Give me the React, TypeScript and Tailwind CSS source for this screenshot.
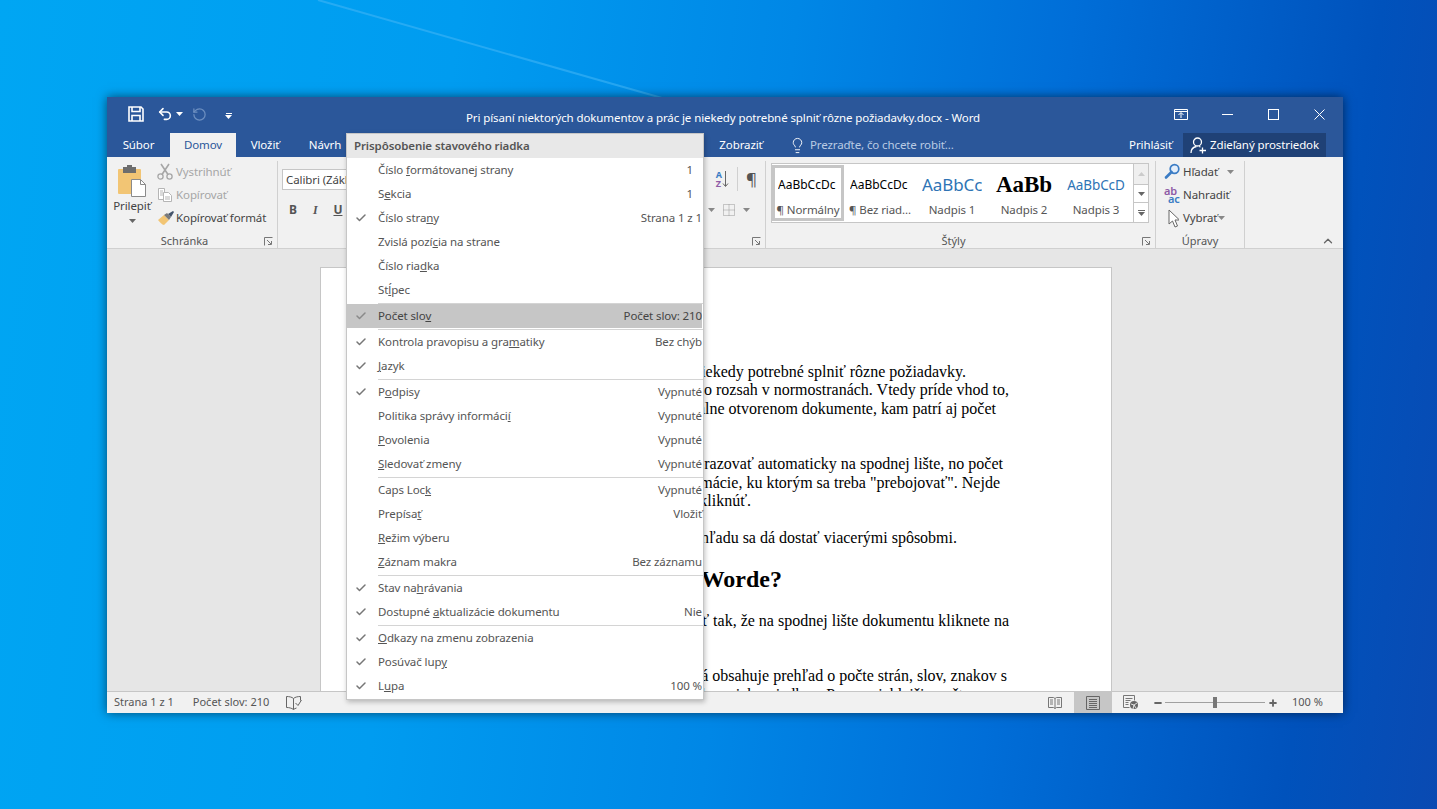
import React from "react";
import { Lightbulb, Undo2, RotateCcw, ChevronUp, Check, Minus, Plus } from "lucide-react";

const Caret = ({ c = "#666" }: { c?: string }) => (
  <svg width="7" height="4" viewBox="0 0 7 4"><path d="M0 0h7L3.5 4z" fill={c} /></svg>
);

const Launcher = () => (
  <svg width="9" height="9" viewBox="0 0 9 9" fill="none" stroke="#777" strokeWidth="1">
    <path d="M.5 8.5v-8h8" />
    <path d="M3 3l4 4M7.5 4v3.5H4" />
  </svg>
);

const Save = () => (
  <svg width="16" height="16" viewBox="0 0 16 16" fill="none" stroke="#fff" strokeWidth="1.6">
    <path d="M1 1h12l2 2v12H1z" />
    <path d="M4 1v4.5h8V1" />
    <path d="M4 15v-5.5h8V15" />
  </svg>
);

const Paste = () => (
  <svg width="30" height="32" viewBox="0 0 30 32">
    <rect x="1" y="4" width="23" height="25" rx="1" fill="#f2c574" />
    <rect x="6" y="2" width="13" height="6" fill="#6d6d6d" />
    <rect x="10" y="0" width="5" height="3" fill="#6d6d6d" />
    <path d="M14.5 14.5h9l5 5v12h-14z" fill="#fff" stroke="#8a8a8a" />
    <path d="M23.5 14.5v5h5" fill="none" stroke="#8a8a8a" />
  </svg>
);

const ScissorsIcon = () => (
  <svg width="16" height="17" viewBox="0 0 16 17" fill="none" stroke="#a6a6a6" strokeWidth="1.3">
    <circle cx="3.5" cy="13.5" r="2.6" />
    <circle cx="12.5" cy="13.5" r="2.6" />
    <path d="M5 11.500L12 1M11 11.500L4 1" strokeWidth="1.600" />
  </svg>
);

const CopyIcon = () => (
  <svg width="16" height="16" viewBox="0 0 16 16" fill="none" stroke="#b5b5b5">
    <path d="M1.5 1.5h6v11h-6z" fill="#fff" />
    <path d="M3 4h3M3 6h3M3 8h3" />
    <path d="M6.5 5.5h5l3 3v6h-8z" fill="#fff" />
    <path d="M8 10h5M8 12h5" />
  </svg>
);

const Painter = () => (
  <svg width="18" height="16" viewBox="0 0 18 16">
    <path d="M1 10l6-5 5 5-5 5c-2 0-4-3-6-5z" fill="#f2c574" />
    <path d="M7 5l3-2 4 4-2 3z" fill="#7a7a7a" />
    <path d="M11 4l5-3 1 1-3 5z" fill="#44546a" />
  </svg>
);

const Magnifier = () => (
  <svg width="17" height="17" viewBox="0 0 17 17" fill="none">
    <circle cx="10.5" cy="6" r="4.3" stroke="#3b7cc4" strokeWidth="1.7" fill="#e4eefa" />
    <path d="M7.5 9L2 14.5" stroke="#3b7cc4" strokeWidth="2.6" strokeLinecap="round" />
  </svg>
);

const CursorIcon = () => (
  <svg width="11" height="19" viewBox="0 0 11 19" fill="#fff" stroke="#666">
    <path d="M1 1v14l3.500-3 2.500 6 2.500-1-2.500-6h4.500z" />
  </svg>
);

const Sheet = () => (
  <svg width="14" height="14" viewBox="0 0 14 14" fill="none" stroke="#777">
    <path d="M.5 1.5h5l1.5 1 1.5-1h5v10h-5L7 12.5 5.500 11.500h-5z" />
    <path d="M7 2.500V12.500M2 4h3M2 6h3M2 8h3M9 4h3M9 6h3M9 8h3" />
  </svg>
);

const Proof = () => (
  <svg width="16" height="14" viewBox="0 0 16 14" fill="none" stroke="#666">
    <path d="M7.500 2.500C6 1 3 .5.500.5v11c2.500 0 5 .5 7 2V2.500z" />
    <path d="M7.500 2.500C9 1 12 .5 14.500.5v4M7.500 13.500c1-.7 2-1.200 3-1.500" />
    <path d="M9.500 7l2.500 2.500L15.500 4" />
  </svg>
);

const Lines = () => (
  <svg width="14" height="14" viewBox="0 0 14 14" fill="none" stroke="#666">
    <path d="M.5.5h13v13H.5z" />
    <path d="M3 3.500h8M3 5.500h8M3 7.500h8M3 9.500h8M3 11.500h8" />
  </svg>
);

const WebIcon = () => (
  <svg width="16" height="15" viewBox="0 0 16 15" fill="none" stroke="#777">
    <path d="M6.500 12.500H.5V.5h11v5" />
    <path d="M2.500 3.500h7M2.500 5.500h5M2.500 7.500h3M2.500 9.500h3" />
    <circle cx="11" cy="10" r="4" fill="#666" stroke="none" />
    <path d="M8 9l3 1 3-2M10 14l1-4 2 3" stroke="#fff" strokeWidth=".8" />
  </svg>
);

const RibbonBoxIcon = () => (
  <svg width="14" height="11" viewBox="0 0 14 11" fill="none" stroke="#fff">
    <path d="M.5.500h13v10H.5zM.5 2.500h13" />
    <path d="M7 9V4M4.500 6L7 3.500 9.500 6" />
  </svg>
);

const CloseIcon = () => (
  <svg width="11" height="11" viewBox="0 0 11 11" fill="none" stroke="#fff" strokeWidth="1">
    <path d="M.5.5l10 10M10.500.5l-10 10" />
  </svg>
);

const UserAdd = () => (
  <svg width="17" height="17" viewBox="0 0 17 17" fill="none" stroke="#fff" strokeWidth="1.300">
    <circle cx="7.500" cy="5" r="4" />
    <path d="M1 16c0-3.500 2.500-6 5.500-6.500M9 9.500l1.500.5" />
    <path d="M12.500 10.500v6M9.500 13.500h6.500" />
  </svg>
);

const Title = "Pri písaní niektorých dokumentov a prác je niekedy potrebné splniť rôzne požiadavky.docx - Word";

function Item({ children, value, check, active, inset }: { children: React.ReactNode; value?: string; check?: boolean; active?: boolean; inset?: boolean }) {
  return (
    <div className={active ? "mr-px flex h-6 items-center bg-[#c6c6c6] text-[#444]" : "flex h-6 items-center text-[#555]"}>
      <span className="flex w-[31px] shrink-0 justify-center pr-[3px]">
        {check && <Check size={12} strokeWidth={3} className={active ? "text-[#8a8a8a]" : "text-[#777]"} />}
      </span>
      <span className="flex-1 whitespace-nowrap">{children}</span>
      {value && <span className={inset ? "pr-[10px] whitespace-nowrap" : active ? "whitespace-nowrap" : "pr-[1px] whitespace-nowrap"}>{value}</span>}
    </div>
  );
}

const Sep = () => (
  <div className="flex h-[2px] items-center pl-[31px]">
    <div className="h-px w-full bg-[#d4d4d4]" />
  </div>
);

function Group({ label, className, labelClass = "", launcher, children }: { label: string; className: string; labelClass?: string; launcher?: boolean; children: React.ReactNode }) {
  return (
    <div className={"relative flex h-full shrink-0 flex-col border-r border-[#d0d0d0] " + className}>
      <div className="min-h-0 flex-1">{children}</div>
      <div className={"mb-[-1px] flex h-[16px] items-center justify-center text-[11px] tracking-normal text-[#555] " + labelClass}>{label}</div>
      {launcher && (
        <span className="absolute bottom-[2px] right-[4px]">
          <Launcher />
        </span>
      )}
    </div>
  );
}

function StyleCard({ sample, label, selected }: { sample: React.ReactNode; label: string; selected?: boolean }) {
  return (
    <div className={selected ? "flex h-[56px] w-[72px] shrink-0 flex-col border-[3px] border-[#c6c6c6] bg-white" : "flex h-[56px] w-[72px] shrink-0 flex-col border-[3px] border-white bg-white"}>
      <div className="flex h-[34px] items-center justify-center overflow-hidden whitespace-nowrap">{sample}</div>
      <div className="text-center text-[11.500px] leading-[16px] text-[#555] whitespace-nowrap">{label}</div>
    </div>
  );
}

const serif = "font-['Liberation_Serif',serif]";

export default function App() {
  return (
    <div className="relative h-[809px] w-[1437px] overflow-hidden bg-[linear-gradient(97deg,#00a6f3_0%,#009cf0_30%,#0087e6_52%,#006ed8_70%,#0052bc_90%,#0a4ab2_100%)] font-['Noto_Sans',sans-serif] tracking-[-0.1px]">
      <svg className="absolute left-0 top-0" width="1437" height="110" viewBox="0 0 1437 110" fill="none">
        <path d="M318 0L662 98" stroke="#3fb4f5" strokeWidth="2" opacity=".6" />
      </svg>

      <div className="absolute left-[107px] top-[97px] flex h-[616px] w-[1236px] flex-col shadow-[0_0_10px_rgba(0,0,0,0.55)]">
        {/* Title bar */}
        <div className="flex h-9 shrink-0 items-center bg-[#2b579a] text-white">
          <div className="flex w-[256px] shrink-0 items-center pb-[2px] pl-[21px]">
            <Save />
            <span className="ml-[13px]"><Undo2 size={16} strokeWidth={2.4} /></span>
            <span className="ml-[3px]"><Caret c="#fff" /></span>
            <span className="ml-[9px] text-[#6d8fc0]"><RotateCcw size={15} strokeWidth={2} /></span>
            <span className="ml-[18px] flex flex-col items-center gap-[1px] pt-[3px]">
              <span className="h-px w-[6px] bg-white" />
              <Caret c="#fff" />
            </span>
          </div>
          <div className="min-w-0 flex-1 whitespace-nowrap pt-[5px] text-center text-[11.500px] text-white">{Title}</div>
          <div className="flex w-[260px] shrink-0 items-center justify-end pb-[2px] pr-px">
            <span className="flex w-[46px] justify-center"><RibbonBoxIcon /></span>
            <span className="flex w-[46px] justify-center"><span className="h-px w-[11px] bg-white" /></span>
            <span className="flex w-[46px] justify-center"><span className="h-[11px] w-[11px] border border-white" /></span>
            <span className="flex w-[46px] justify-center"><CloseIcon /></span>
          </div>
        </div>

        {/* Tabs */}
        <div className="flex h-6 shrink-0 items-center bg-[#2b579a] text-[11.500px] text-white">
          <div className="flex h-full w-[63px] items-center justify-center">Súbor</div>
          <div className="flex h-full w-[66px] items-center justify-center bg-[#f1f1f1] text-[#2b579a]">Domov</div>
          <div className="flex h-full w-[58px] items-center justify-center">Vložiť</div>
          <div className="flex h-full w-[62px] items-center justify-center">Návrh</div>
          <div className="flex h-full w-[84px] items-center justify-center">Rozloženie</div>
          <div className="flex h-full w-[84px] items-center justify-center">Referencie</div>
          <div className="flex h-full w-[110px] items-center justify-center">Korešpondencia</div>
          <div className="flex h-full w-[78px] items-center justify-center">Revízia</div>
          <div className="flex h-full w-[58px] items-center justify-center">Zobraziť</div>
          <div className="ml-[19px] flex items-center text-[#b9cbe4]">
            <Lightbulb size={17} strokeWidth={1.300} className="text-white" />
            <span className="ml-[4px]">Prezraďte, čo chcete robiť...</span>
          </div>
          <div className="flex-1" />
          <span>Prihlásiť</span>
          <div className="ml-[11px] mr-[17px] flex h-full w-[143px] items-center justify-center bg-[#1f4176]">
            <UserAdd />
            <span className="ml-[3px] whitespace-nowrap">Zdieľaný prostriedok</span>
          </div>
        </div>

        {/* Ribbon */}
        <div className="flex h-[92px] shrink-0 border-b border-[#d0d0d0] bg-[#f1f1f1] pt-[4px] text-[11.500px] text-[#444]">
          <Group label="Schránka" className="w-[171px]" labelClass="pr-[15px]" launcher>
            <div className="flex">
              <div className="flex w-[50px] flex-col items-center">
                <div className="mt-[4px]"><Paste /></div>
                <div className="mt-[1px] leading-[16px]">Prilepiť</div>
                <div className="mt-[5px]"><Caret /></div>
              </div>
              <div className="mt-[-1px] flex flex-col">
                <div className="flex h-[23px] items-center text-[#a6a6a6]">
                  <span className="w-[19px]"><ScissorsIcon /></span>
                  <span>Vystrihnúť</span>
                </div>
                <div className="flex h-[23px] items-center text-[#a6a6a6]">
                  <span className="w-[19px]"><CopyIcon /></span>
                  <span>Kopírovať</span>
                </div>
                <div className="flex h-[23px] items-center whitespace-nowrap">
                  <span className="w-[19px]"><Painter /></span>
                  <span>Kopírovať formát</span>
                </div>
              </div>
            </div>
          </Group>
          <Group label="Písmo" className="w-[240px]">
            <div className="pl-[4px] pt-[8px]">
              <div className="flex h-[21px] w-[180px] items-center border border-[#c6c6c6] bg-white pl-[3px]">Calibri (Základný text)</div>
              <div className="mt-[10px] flex h-[20px] items-center gap-[16px] pl-[7px] text-[12px] text-[#555]">
                <span className="font-bold">B</span>
                <span className={"font-bold italic " + serif}>I</span>
                <span className="font-bold underline">U</span>
              </div>
            </div>
          </Group>
          <Group label="Odsek" className="w-[248px]" launcher>
            <div className="flex flex-col items-end pr-[8px] pt-[6px]">
              <div className="flex h-[24px] items-center gap-[8px]">
                <span className="flex items-center">
                  <span className="flex flex-col text-[9px] font-bold leading-[9px]">
                    <span className="text-[#3b7cc4]">A</span>
                    <span className="text-[#8e5ba6]">Z</span>
                  </span>
                  <svg width="7" height="18" viewBox="0 0 7 18" fill="none" stroke="#666"><path d="M3.500 1v15M1 13.500l2.500 3 2.500-3" /></svg>
                </span>
                <span className="w-px self-stretch bg-[#d0d0d0]" />
                <span className="text-[17px] leading-[20px] text-[#555]">¶</span>
              </div>
              <div className="mt-[13px] flex items-center gap-[8px] pr-[7px]">
                <Caret c="#888" />
                <svg width="12" height="12" viewBox="0 0 12 12" fill="none" stroke="#999" strokeDasharray="1 1"><path d="M.5.500h11v11H.5zM6 .5v11M.5 6h11" /></svg>
                <Caret c="#888" />
              </div>
            </div>
          </Group>
          <Group label="Štýly" className="w-[390px]" labelClass="pr-[14px]" launcher>
            <div className="ml-[5px] mt-[2px] flex h-[60px] w-[378px] border border-[#c6c6c6] bg-white">
              <div className="flex w-[361px] items-start overflow-hidden pt-[1px]">
                <StyleCard selected label="¶ Normálny" sample={<span className="w-[60px] overflow-hidden text-[12px] tracking-normal text-black">AaBbCcDc</span>} />
                <StyleCard label="¶ Bez riad..." sample={<span className="w-[60px] overflow-hidden text-[12px] tracking-normal text-black">AaBbCcDc</span>} />
                <StyleCard label="Nadpis 1" sample={<span className="w-[60px] overflow-hidden text-[17px] text-[#2e74b5]">AaBbCc</span>} />
                <StyleCard label="Nadpis 2" sample={<span className={"text-[23px] font-bold text-black " + serif}>AaBb</span>} />
                <StyleCard label="Nadpis 3" sample={<span className="text-[13.500px] text-[#2e74b5]">AaBbCcD</span>} />
              </div>
              <div className="flex w-[15px] flex-col border-l border-[#c6c6c6]">
                <div className="flex h-[20px] items-center justify-center bg-[#e6e6e6] opacity-60"><span className="rotate-180"><Caret c="#aaa" /></span></div>
                <div className="flex h-[19px] items-center justify-center border-y border-[#c6c6c6]"><Caret /></div>
                <div className="flex flex-1 flex-col items-center justify-center gap-[1px]"><span className="h-px w-[7px] bg-[#666]" /><Caret /></div>
              </div>
            </div>
          </Group>
          <Group label="Úpravy" className="w-[89px]">
            <div className="mt-[-1px] flex flex-col pl-[8px]">
              <div className="flex h-[23px] items-center">
                <span className="w-[19px]"><Magnifier /></span>
                <span>Hľadať</span>
                <span className="ml-[9px]"><Caret c="#888" /></span>
              </div>
              <div className="flex h-[23px] items-center">
                <span className="flex w-[19px] flex-col text-[11px] font-semibold leading-[8px]">
                  <span className="text-[#8e5ba6]">ab</span>
                  <span className="pl-[4px] text-[#3b7cc4]">ac</span>
                </span>
                <span>Nahradiť</span>
              </div>
              <div className="flex h-[24px] items-center">
                <span className="ml-[4px] mr-[4px] flex"><CursorIcon /></span>
                <span>Vybrať</span>
                <span className="ml-[1px]"><Caret c="#888" /></span>
              </div>
            </div>
          </Group>
          <div className="flex flex-1 items-end justify-end pr-[8px]">
            <ChevronUp size={14} strokeWidth={2.200} className="text-[#666]" />
          </div>
        </div>

        {/* Document */}
        <div className="min-h-0 flex-1 overflow-hidden bg-[#e6e6e6] pl-[213px] pt-[18px]">
          <div className={"h-[500px] w-[792px] overflow-hidden border border-[#c6c6c6] bg-white pt-[95px] text-[16px] leading-[18.400px] tracking-normal text-black " + serif}>
            <div className="flex justify-end whitespace-nowrap pr-[145px]">Pri písaní niektorých dokumentov a prác je niekedy potrebné splniť rôzne požiadavky.</div>
            <div className="flex justify-end whitespace-nowrap pr-[102px]">Môže ísť o počet slov alebo rozsah v normostranách. Vtedy príde vhod to,</div>
            <div className="flex justify-end whitespace-nowrap pr-[115px]">keď máte údaje v aktuálne otvorenom dokumente, kam patrí aj počet</div>
            <div className="mt-[37px] flex justify-end whitespace-nowrap pr-[108px]">Počet strán sa môže zobrazovať automaticky na spodnej lište, no počet</div>
            <div className="flex justify-end whitespace-nowrap pr-[111px]">slov patrí medzi informácie, ku ktorým sa treba "prebojovať". Nejde</div>
            <div className="flex justify-end whitespace-nowrap pr-[360px]">Stačí len správne miesto kliknúť.</div>
            <div className="mt-[19px] flex justify-end whitespace-nowrap pr-[154px]">K tomuto prehľadu sa dá dostať viacerými spôsobmi.</div>
            <div className="mt-[17px] flex h-[28px] items-center justify-end whitespace-nowrap pr-[329px] text-[24px] font-bold">Ako zistiť počet slov vo Worde?</div>
            <div className="mt-[19px] flex justify-end whitespace-nowrap pr-[102px]">Najjednoduchšie je to urobiť tak, že na spodnej lište dokumentu kliknete na</div>
            <div className="mt-[37px] flex justify-end whitespace-nowrap pr-[104px]">Otvorí sa tabuľka, ktorá obsahuje prehľad o počte strán, slov, znakov s</div>
            <div className="flex justify-end whitespace-nowrap pr-[140px]">medzerami i bez nich a riadkov. Pre rozsiahlejšie počty</div>
          </div>
        </div>

        {/* Status bar */}
        <div className="flex h-[22px] shrink-0 items-center border-t border-[#c6c6c6] bg-[#f1f1f1] text-[11px] tracking-normal text-[#555]">
          <span className="ml-[7px]">Strana 1 z 1</span>
          <span className="ml-[19px]">Počet slov: 210</span>
          <span className="ml-[17px]"><Proof /></span>
          <div className="flex-1" />
          <span className="flex h-full w-[38px] items-center justify-center"><Sheet /></span>
          <span className="flex h-full w-[38px] items-center justify-center bg-[#c6c6c6]"><Lines /></span>
          <span className="flex h-full w-[38px] items-center justify-center"><WebIcon /></span>
          <Minus size={10} strokeWidth={4.500} className="ml-[3px] text-[#666]" />
          <div className="relative ml-[2px] h-px w-[100px] bg-[#a0a0a0]">
            <span className="absolute left-[48px] top-[-5px] h-[11px] w-[4px] bg-[#777]" />
          </div>
          <Plus size={10} strokeWidth={4.500} className="ml-[3px] text-[#666]" />
          <span className="ml-[14px] mr-[21px] w-[30px] whitespace-nowrap">100 %</span>
        </div>

        {/* Status bar customisation menu */}
        <div className="absolute left-[239px] top-[36px] w-[358px] border border-[#c6c6c6] bg-white pb-px text-[11.500px] shadow-[1px_2px_5px_rgba(0,0,0,0.25)]">
          <div className="flex h-[24px] items-center bg-[#e8e8e8] pl-[7px] font-semibold text-[#555]">Prispôsobenie stavového riadka</div>
          <Item value="1" inset>Číslo <u>f</u>ormátovanej strany</Item>
          <Item value="1" inset>S<u>e</u>kcia</Item>
          <Item value="Strana 1 z 1" check>Číslo stra<u>n</u>y</Item>
          <Item>Zvislá pozí<u>c</u>ia na strane</Item>
          <Item>Číslo ria<u>d</u>ka</Item>
          <Item>St<u>ĺ</u>pec</Item>
          <Sep />
          <Item value="Počet slov: 210" check active>Počet slo<u>v</u></Item>
          <Sep />
          <Item value="Bez chýb" check>Kontrola pravopisu a gra<u>m</u>atiky</Item>
          <Item check><u>J</u>azyk</Item>
          <Sep />
          <Item value="Vypnuté" check>P<u>o</u>dpisy</Item>
          <Item value="Vypnuté">Politika správy informáci<u>í</u></Item>
          <Item value="Vypnuté"><u>P</u>ovolenia</Item>
          <Item value="Vypnuté"><u>S</u>ledovať zmeny</Item>
          <Sep />
          <Item value="Vypnuté">Caps Loc<u>k</u></Item>
          <Item value="Vložiť">Prepísa<u>ť</u></Item>
          <Item><u>R</u>ežim výberu</Item>
          <Item value="Bez záznamu"><u>Z</u>áznam makra</Item>
          <Sep />
          <Item check>Stav na<u>h</u>rávania</Item>
          <Item value="Nie" check>Dostupné <u>a</u>ktualizácie dokumentu</Item>
          <Sep />
          <Item check><u>O</u>dkazy na zmenu zobrazenia</Item>
          <Item check>Posúvač lup<u>y</u></Item>
          <Item value="100 %" check>L<u>u</u>pa</Item>
        </div>
      </div>
    </div>
  );
}
